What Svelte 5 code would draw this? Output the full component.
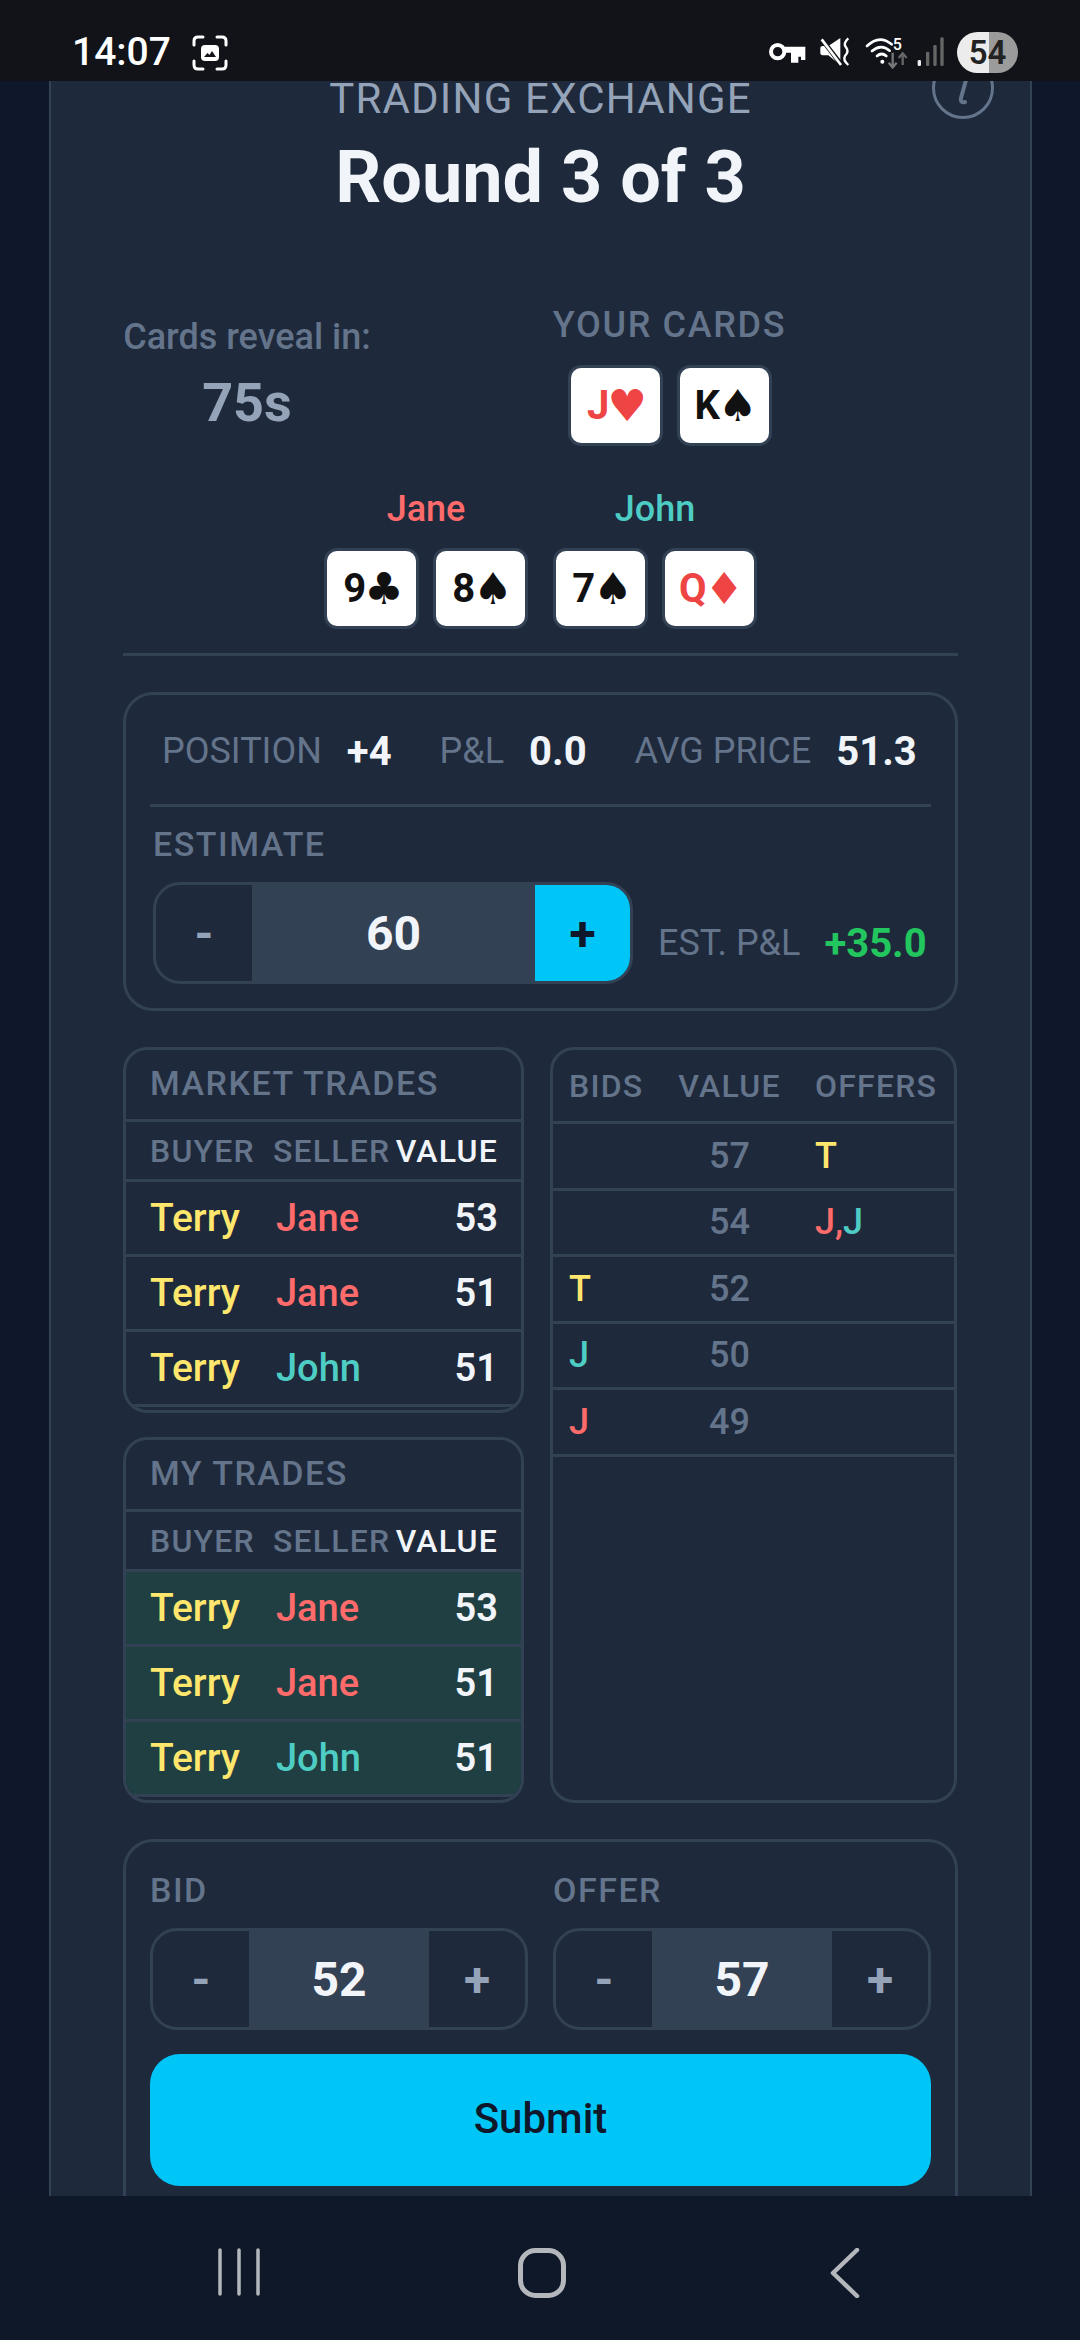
<script>
  const market = [
    { b: 'Terry', s: 'Jane', sc: 'jane', v: 53 },
    { b: 'Terry', s: 'Jane', sc: 'jane', v: 51 },
    { b: 'Terry', s: 'John', sc: 'john', v: 51 }
  ];
  const book = [
    { bid: '', bc: '', v: 57, offers: [{ t: 'T', c: 'terry' }] },
    { bid: '', bc: '', v: 54, offers: [{ t: 'J', c: 'jane' }, { t: ',', c: 'jane' }, { t: 'J', c: 'john' }] },
    { bid: 'T', bc: 'terry', v: 52, offers: [] },
    { bid: 'J', bc: 'john', v: 50, offers: [] },
    { bid: 'J', bc: 'jane', v: 49, offers: [] }
  ];
  const tables = [
    { title: 'MARKET TRADES', mine: false },
    { title: 'MY TRADES', mine: true }
  ];
  const players = [
    { name: 'Jane', cls: 'jane', cards: [['9', '♣', false], ['8', '♠', false]] },
    { name: 'John', cls: 'john', cards: [['7', '♠', false], ['Q', '♦', true]] }
  ];
  const quotes = [
    { label: 'BID', v: 52 },
    { label: 'OFFER', v: 57 }
  ];
</script>

<div class="screen">
  <header class="status">
    <span class="time">14:07</span>
    <svg class="shot" viewBox="0 0 36 36" width="36" height="36" aria-hidden="true">
      <path d="M2 10V6q0-4 4-4h5M25 2h5q4 0 4 4v4M34 26v4q0 4-4 4h-5M11 34H6q-4 0-4-4v-4" fill="none" stroke="#fff" stroke-width="3" stroke-linecap="round"/>
      <rect x="9" y="10" width="18" height="16" rx="4" fill="#fff"/>
      <path d="M12 22l3.500-4 2 2 2.500-4 4 6z" fill="#111318"/>
    </svg>
    <svg class="sys" viewBox="60 60 570 150" width="190" height="50" aria-hidden="true">
      <circle cx="110" cy="125" r="20" fill="none" stroke="#fff" stroke-width="12"/>
      <path d="M130 110H193V150H180V140H172V158H150V128H130Z" fill="#fff"/>
      <path d="M238 114Q238 108 245 108H262L298 84V165L262 136H245Q238 136 238 130Z" fill="#fff"/>
      <path d="M238 82L304 168" stroke="#111318" stroke-width="14"/>
      <path d="M242 88L300 165" stroke="#fff" stroke-width="8"/>
      <path d="M322 85Q305 100 315 112Q325 125 312 138Q305 150 322 165" fill="none" stroke="#fff" stroke-width="7"/>
      <path d="M378 108Q415 72 452 103M393 123Q420 100 446 122M408 138Q422 126 436 138" fill="none" stroke="#fff" stroke-width="8" stroke-linecap="round"/>
      <circle cx="424" cy="155" r="6" fill="#fff"/>
      <text x="455" y="121" class="five">5</text>
      <path d="M455 128V170M443 158L455 172L467 158" fill="none" stroke="#777" stroke-width="7"/>
      <path d="M485 165V130M473 144L485 130L497 144" fill="none" stroke="#666" stroke-width="7"/>
      <rect x="530" y="150" width="10" height="18" rx="4" fill="#eee"/>
      <rect x="555" y="125" width="10" height="43" rx="4" fill="#666"/>
      <rect x="577" y="105" width="10" height="63" rx="4" fill="#666"/>
      <rect x="598" y="82" width="10" height="86" rx="4" fill="#666"/>
    </svg>
    <span class="pill">54</span>
  </header>

  <main class="viewport">
    <div class="card">
      <svg class="info" viewBox="0 0 64 64" width="64" height="64" aria-hidden="true">
        <circle cx="32" cy="32" r="29.500" fill="none" stroke="#64748b" stroke-width="3"/>
        <path d="M35 24L30 42Q29 47 34 46" fill="none" stroke="#64748b" stroke-width="4" stroke-linecap="round"/>
      </svg>
      <p class="eyebrow">TRADING EXCHANGE</p>
      <h1>Round 3 of 3</h1>

      <section class="reveal">
        <div class="timer">
          <p class="timer-label">Cards reveal in:</p>
          <p class="timer-value">75s</p>
        </div>
        <div class="mine">
          <p class="mine-label">YOUR CARDS</p>
          <div class="cards">
            <span class="playing red">J<span class="suit">♥</span></span>
            <span class="playing">K<span class="suit">♠</span></span>
          </div>
        </div>
      </section>

      <section class="players">
        {#each players as p}
          <div class="player">
            <p class="pname {p.cls}">{p.name}</p>
            <div class="cards">
              {#each p.cards as c}
                <span class="playing" class:red={c[2]}>{c[0]}<span class="suit">{c[1]}</span></span>
              {/each}
            </div>
          </div>
        {/each}
      </section>

      <hr class="rule" />

      <section class="panel stats">
        <div class="stat-row">
          <span class="k">POSITION</span><b class="n">+4</b>
          <span class="k second">P&amp;L</span><b class="n">0.0</b>
          <span class="k second">AVG PRICE</span><b class="n">51.3</b>
        </div>
        <div class="stat-rule"></div>
        <p class="field est-title">ESTIMATE</p>
        <div class="est-row">
          <div class="stepper est">
            <span class="step">-</span>
            <span class="val">60</span>
            <span class="step on">+</span>
          </div>
          <div class="est-pl">
            <span class="k">EST. P&amp;L</span><b class="gain">+35.0</b>
          </div>
        </div>
      </section>

      <section class="boards">
        <div class="left">
          {#each tables as t}
            <div class="tbl">
              <div class="tbl-title">{t.title}</div>
              <div class="tr head">
                <span>BUYER</span><span>SELLER</span><span class="vh">VALUE</span>
              </div>
              {#each market as r}
                <div class="tr body" class:mine-row={t.mine}>
                  <span class="terry">{r.b}</span>
                  <span class="nm {r.sc}">{r.s}</span>
                  <b class="num">{r.v}</b>
                </div>
              {/each}
            </div>
          {/each}
        </div>
        <div class="book">
          <div class="br bhead">
            <span>BIDS</span><span class="c">VALUE</span><span>OFFERS</span>
          </div>
          {#each book as r}
            <div class="br brow">
              <span class={r.bc}>{r.bid}</span>
              <span class="c price">{r.v}</span>
              <span>{#each r.offers as o}<span class={o.c}>{o.t}</span>{/each}</span>
            </div>
          {/each}
        </div>
      </section>

      <section class="panel order">
        <div class="quotes">
          {#each quotes as q}
            <div>
              <p class="field">{q.label}</p>
              <div class="stepper">
                <span class="step">-</span>
                <span class="val">{q.v}</span>
                <span class="step">+</span>
              </div>
            </div>
          {/each}
        </div>
        <button class="submit">Submit</button>
      </section>
    </div>
  </main>

  <nav class="nav">
    <svg viewBox="0 0 42 48" width="42" height="48" aria-hidden="true">
      <path d="M2 2V46M21 2V46M40 2V46" stroke="#b4b7bc" stroke-width="3.500" stroke-linecap="round"/>
    </svg>
    <svg viewBox="0 0 48 50" width="48" height="50" aria-hidden="true">
      <rect x="2.500" y="2.500" width="43" height="45" rx="15" fill="none" stroke="#b4b7bc" stroke-width="5"/>
    </svg>
    <svg class="back" viewBox="0 0 30 50" width="30" height="50" aria-hidden="true">
      <path d="M27 2L3 25L27 48" fill="none" stroke="#b4b7bc" stroke-width="4.500" stroke-linecap="round" stroke-linejoin="round"/>
    </svg>
  </nav>
</div>

<style>
  :global(body) { margin: 0; background: #0f172a; }
  p, h1 { margin: 0; }
  .screen {
    width: 1080px; height: 2340px; display: flex; flex-direction: column; overflow: hidden;
    font-family: Roboto, "DejaVu Sans", sans-serif; background: #0f172a;
  }
  .status {
    height: 81px; flex: none; background: #111318; display: flex; align-items: center;
    padding: 24px 62px 0 72px; box-sizing: border-box; color: #fff;
  }
  .time { font-size: 39px; font-weight: 500; line-height: 1; }
  .shot { margin-left: 21px; }
  .sys { margin-left: auto; margin-right: 6px; margin-top: 5px; }
  .five { font: 500 48px Roboto, sans-serif; fill: #fff; }
  .pill {
    width: 61px; height: 41px; border-radius: 21px;
    background: linear-gradient(90deg, #ececec 0 32px, #9b9b9b 32px);
    color: #222; font-size: 33px; font-weight: 600; display: flex; align-items: center; justify-content: center;
  }
  .viewport { flex: 1; min-height: 0; overflow: hidden; }
  .card {
    margin: -40px 48px 0 49px; padding: 40px 72px 0; background: #1e293b;
    border: solid #334155; border-width: 0 2px; position: relative;
  }
  .info { position: absolute; left: 880px; top: 15px; }
  .eyebrow { font-size: 42px; line-height: 36px; color: #94a3b8; text-align: center; letter-spacing: 1.200px; }
  h1 { font-size: 72px; line-height: 72px; font-weight: 700; color: #f1f5f9; text-align: center; margin-top: 25px; }

  .reveal { display: flex; gap: 182px; margin-top: 86px; }
  .timer { width: 248px; padding-top: 19px; text-align: center; }
  .timer-label { font-size: 36px; line-height: 36px; font-weight: 500; color: #64748b; white-space: nowrap; }
  .timer-value { font-size: 54px; line-height: 56px; font-weight: 700; color: #94a3b8; margin-top: 20px; }
  .mine { width: 233px; display: flex; flex-direction: column; align-items: center; padding-top: 7px; }
  .mine-label { font-size: 36px; line-height: 36px; font-weight: 500; color: #64748b; letter-spacing: 1.650px; white-space: nowrap; }
  .cards { display: flex; gap: 14px; margin-top: 22px; }
  .player .cards { margin-top: 21px; }
  .playing {
    box-sizing: border-box; width: 95px; height: 81px; background: #fff; border: 3px solid #334155; border-radius: 13px;
    display: flex; align-items: center; justify-content: center; color: #111; font-size: 40px; font-weight: 700; line-height: 1;
    padding-left: 4px;
  }
  .suit { font-family: "DejaVu Sans", sans-serif; font-size: 44px; font-weight: 400; margin-left: -2px; }
  .playing.red { color: #ef4444; }

  .players { display: flex; justify-content: center; gap: 25px; margin-top: 45px; }
  .player { display: flex; flex-direction: column; align-items: center; }
  .pname { font-size: 36px; line-height: 36px; font-weight: 500; }
  .jane { color: #ff6b6b; }
  .john { color: #4ecdc4; }
  .terry { color: #ffe66d; }
  .rule { border: 0; height: 3px; background: #334155; margin: 24px 0 0; }

  .panel { border: 3px solid #334155; border-radius: 30px; }
  .stats { margin-top: 36px; padding: 32px 24px 24px; }
  .stat-row { display: flex; align-items: center; height: 48px; padding-left: 12px; white-space: nowrap; }
  .k { font-size: 36px; color: #64748b; }
  .n { font-size: 40px; font-weight: 700; color: #f1f5f9; margin-left: 25px; }
  .second { margin-left: 48px; }
  .stat-rule { height: 3px; background: #334155; margin-top: 29px; }
  .field { font-size: 34px; line-height: 36px; font-weight: 500; color: #64748b; letter-spacing: 1.500px; }
  .est-title { margin-top: 19px; padding-left: 3px; }
  .est-row { display: flex; align-items: center; margin-top: 20px; margin-left: 3px; }
  .stepper {
    box-sizing: border-box; height: 102px; border: 3px solid #334155; border-radius: 27px; overflow: hidden;
    display: flex; align-items: stretch;
  }
  .stepper.est { width: 480px; flex: none; }
  .step {
    width: 96px; flex: none; display: flex; align-items: center; justify-content: center;
    font-size: 48px; font-weight: 700; color: #94a3b8;
  }
  .step.on { background: #00c6f8; color: #0f172a; width: 95px; }
  .val {
    flex: 1; background: #334155; color: #f1f5f9; font-size: 48px; font-weight: 700;
    display: flex; align-items: center; justify-content: center;
  }
  .est-pl { margin-left: 25px; padding-top: 20px; display: flex; align-items: center; white-space: nowrap; }
  .gain { font-size: 40px; font-weight: 700; color: #22c55e; margin-left: 24px; }

  .boards { display: grid; grid-template-columns: 401px 407px; gap: 26px; margin-top: 36px; }
  .left { display: flex; flex-direction: column; gap: 24px; }
  .tbl { box-sizing: border-box; height: 366px; border: 3px solid #334155; border-radius: 24px; overflow: hidden; }
  .tbl-title {
    box-sizing: border-box; height: 72px; border-bottom: 3px solid #334155; padding: 15px 24px 0; font-size: 34px; line-height: 36px;
    font-weight: 500; color: #64748b; letter-spacing: 1.500px;
  }
  .tr { display: grid; grid-template-columns: 123px 1fr auto; padding: 0 23px 0 24px; align-items: center; border-bottom: 3px solid #334155; box-sizing: border-box; }
  .head { height: 60px; font-size: 32px; font-weight: 500; color: #64748b; letter-spacing: 1.200px; }
  .vh { color: #f1f5f9; }
  .body { height: 75px; font-size: 38px; font-weight: 500; }
  .terry { font-size: 39px; }
  .nm { margin-left: 3px; }
  .num { color: #f1f5f9; font-size: 38px; font-weight: 600; }
  .mine-row { background: #1f3f43; }

  .book { border: 3px solid #334155; border-radius: 24px; overflow: hidden; }
  .br {
    display: grid; grid-template-columns: 75px 103px 1fr; column-gap: 34px; padding-left: 16px; box-sizing: border-box;
    align-items: center; border-bottom: 3px solid #334155;
  }
  .bhead { height: 74px; font-size: 32px; font-weight: 500; color: #64748b; letter-spacing: 1.200px; }
  .brow { height: 66.500px; font-size: 36px; font-weight: 500; }
  .brow .terry { font-size: 36px; }
  .c { text-align: center; }
  .price { color: #64748b; font-weight: 500; }

  .order { margin-top: 36px; padding: 30px 24px 0; border-bottom: 0; height: 500px; box-sizing: border-box; }
  .quotes { display: grid; grid-template-columns: 1fr 1fr; gap: 25px; }
  .quotes .stepper { margin-top: 20px; }
  .submit {
    display: block; width: 100%; height: 132px; margin-top: 24px; border: 0; border-radius: 30px; background: #00c6f8;
    color: #0f172a; font: 500 42px Roboto, sans-serif; padding: 0 0 3px;
  }

  .nav { height: 144px; flex: none; background: #0f1829; display: flex; padding: 52px 0 0 218px; box-sizing: border-box; gap: 258px; align-items: flex-start; }
  .back { margin-left: 6px; }
</style>
